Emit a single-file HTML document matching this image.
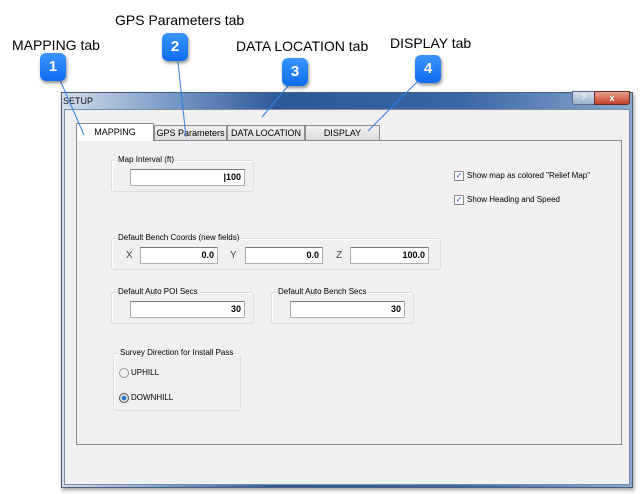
<!DOCTYPE html>
<html><head><style>
body{margin:0;width:643px;height:494px;background:#fff;position:relative;overflow:hidden;font-family:"Liberation Sans",sans-serif}
.a{position:absolute}
.lbl{font-size:14px;color:#000}
.b{position:absolute;width:26px;height:28px;border-radius:6px;background:linear-gradient(#3a95ff,#0f6cf0);box-shadow:1px 2px 3px rgba(0,0,0,.45);color:#fff;font-weight:bold;font-size:15px;text-align:center;line-height:28px}
.win{left:61px;top:92px;width:570px;height:394px;background:linear-gradient(90deg,#d4dde9,#7d9dc8 18%,#2d5898 38%,#3a66a5 70%,#88a8cf);box-shadow:1px 2px 4px rgba(0,0,0,.4);border:1px solid #4d5f78}
.client{left:2px;top:16px;width:564px;height:374px;background:#f0f0f0;border:1px solid #7d8ea5}
.s{font-size:8px;color:#000}
.grp{position:absolute;border:1px solid #dcdcdc;border-radius:3px;box-shadow:inset 1px 1px 0 #fff}
.gl{position:absolute;top:-6px;left:5px;background:#f0f0f0;font-size:8px;padding:0 1px}
.tb{position:absolute;background:#fff;border:1px solid #abadb3;border-top-color:#7a7a7a;font-size:9px;font-weight:bold;text-align:right;padding-right:3px;box-sizing:border-box;line-height:14px}
.tab{position:absolute;top:125px;height:15px;border:1px solid #8c8c8c;border-bottom:none;background:linear-gradient(#f2f2f2,#dcdcdc);font-size:9px;text-align:center;line-height:15px;box-sizing:border-box}
</style></head><body>
<div class="a lbl" style="left:12px;top:37px">MAPPING tab</div>
<div class="a lbl" style="left:115px;top:12px">GPS Parameters tab</div>
<div class="a lbl" style="left:236px;top:38px">DATA LOCATION tab</div>
<div class="a lbl" style="left:390px;top:35px">DISPLAY tab</div>

<div class="a win">
 <div class="a" style="left:1px;top:3px;font-size:9px;color:#111">SETUP</div>
 <div class="a" style="left:510px;top:-2px;width:21px;height:12px;border:1px solid #5b6b86;border-radius:0 0 0 3px;background:linear-gradient(#d6e0ee,#9fb2cc);font-size:8px;color:#fff;text-align:center;line-height:12px">?</div>
 <div class="a" style="left:532px;top:-2px;width:34px;height:12px;border:1px solid #6b2a22;border-radius:0 0 3px 0;background:linear-gradient(#e6a090,#c5402a);font-size:9px;color:#fff;text-align:center;line-height:12px;font-weight:bold">x</div>
 <div class="a client"></div>
</div>
<div class="a" style="left:76px;top:140px;width:544px;height:303px;border:1px solid #898c95;background:#f0f0f0"></div>
<div class="tab" style="left:154px;width:73px">GPS Parameters</div>
<div class="tab" style="left:227px;width:78px">DATA LOCATION</div>
<div class="tab" style="left:305px;width:75px">DISPLAY</div>
<div class="tab" style="left:76px;width:78px;top:123px;height:18px;background:#fff;line-height:16px">MAPPING</div>

<div class="grp" style="left:111px;top:160px;width:141px;height:30px"><div class="gl">Map Interval (ft)</div></div>
<div class="tb" style="left:130px;top:169px;width:115px;height:17px">|100</div>

<div class="grp" style="left:111px;top:238px;width:328px;height:30px"><div class="gl">Default Bench Coords (new fields)</div></div>
<div class="a s" style="left:126px;top:250px;font-size:10px;color:#444">X</div>
<div class="tb" style="left:140px;top:247px;width:78px;height:17px">0.0</div>
<div class="a s" style="left:230px;top:250px;font-size:10px;color:#444">Y</div>
<div class="tb" style="left:245px;top:247px;width:78px;height:17px">0.0</div>
<div class="a s" style="left:336px;top:250px;font-size:10px;color:#444">Z</div>
<div class="tb" style="left:350px;top:247px;width:79px;height:17px">100.0</div>

<div class="grp" style="left:111px;top:292px;width:141px;height:30px"><div class="gl">Default Auto POI Secs</div></div>
<div class="tb" style="left:130px;top:301px;width:115px;height:17px">30</div>
<div class="grp" style="left:271px;top:292px;width:141px;height:30px"><div class="gl">Default Auto Bench Secs</div></div>
<div class="tb" style="left:290px;top:301px;width:115px;height:17px">30</div>

<div class="grp" style="left:113px;top:353px;width:126px;height:56px"><div class="gl">Survey Direction for Install Pass</div></div>
<div class="a" style="left:119px;top:368px;width:8px;height:8px;border:1px solid #999;border-radius:50%;background:#eee"></div>
<div class="a s" style="left:131px;top:368px">UPHILL</div>
<div class="a" style="left:119px;top:393px;width:8px;height:8px;border:1px solid #555;border-radius:50%;background:radial-gradient(#1b6fc0 30%,#ddd 45%)"></div>
<div class="a s" style="left:131px;top:393px">DOWNHILL</div>

<div class="a" style="left:454px;top:171px;width:8px;height:8px;border:1px solid #888;background:#fff;font-size:8px;line-height:8px;color:#2a55a8;text-align:center">✓</div>
<div class="a s" style="left:467px;top:171px">Show map as colored "Relief Map"</div>
<div class="a" style="left:454px;top:195px;width:8px;height:8px;border:1px solid #888;background:#fff;font-size:8px;line-height:8px;color:#2a55a8;text-align:center">✓</div>
<div class="a s" style="left:467px;top:195px">Show Heading and Speed</div>

<svg class="a" style="left:0;top:0" width="643" height="494"><g stroke="#2f7fe8" stroke-width="1" fill="none">
<line x1="60" y1="80" x2="84" y2="135"/><line x1="178" y1="62" x2="186" y2="137"/>
<line x1="288" y1="86" x2="262" y2="117"/><line x1="417" y1="82" x2="368" y2="131"/></g></svg>
<div class="b" style="left:40px;top:53px">1</div>
<div class="b" style="left:162px;top:33px">2</div>
<div class="b" style="left:282px;top:58px">3</div>
<div class="b" style="left:415px;top:55px">4</div>
</body></html>
